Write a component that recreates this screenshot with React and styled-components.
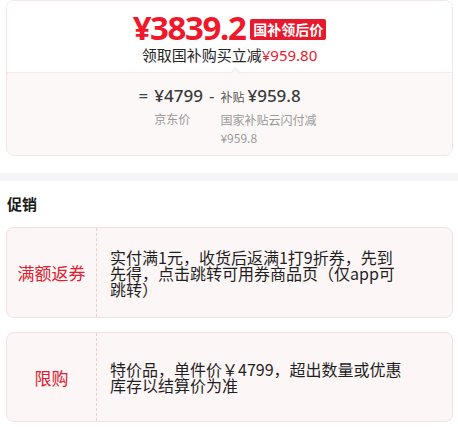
import React from 'react';
import styled, { createGlobalStyle } from 'styled-components';

const GlobalStyle = createGlobalStyle`
  body {
    margin: 0;
    background: #fff;
    font-family: "Noto Sans", "Noto Sans CJK SC", sans-serif;
    color: #1a1a1a;
  }
`;

const Page = styled.div`
  width: 458px;
  padding: 0 5px 0 6px;
  box-sizing: border-box;
`;

const PriceCard = styled.div`
  border: 1px solid #f1e6e8;
  border-radius: 8px;
  overflow: hidden;
`;

const Top = styled.div`
  height: 71px;
  box-sizing: border-box;
  padding-top: 11px;
  display: flex;
  flex-direction: column;
  align-items: center;
  background: #fff;
`;

const PriceRow = styled.div`
  display: flex;
  align-items: center;
  gap: 5px;
  height: 32px;
`;

const BigPrice = styled.span`
  font-family: "Noto Sans", sans-serif;
  font-weight: 700;
  font-size: 33px;
  line-height: 32px;
  letter-spacing: -1.4px;
  color: #f0182b;
`;

const Badge = styled.span`
  background: #e8192c;
  color: #fff;
  font-family: "Noto Sans CJK SC", sans-serif;
  font-weight: 700;
  font-size: 14px;
  line-height: 21px;
  padding: 0 3px;
  border-radius: 2px;
  margin-top: 3px;
`;

const Sub = styled.div`
  font-family: "Noto Sans CJK SC", sans-serif;
  font-size: 15px;
  line-height: 20px;
  margin-top: 1px;
  color: #262626;
`;

const Red = styled.span`
  font-family: "Noto Sans", sans-serif;
  color: #e8192c;
`;

const Bottom = styled.div`
  position: relative;
  height: 83px;
  box-sizing: border-box;
  border-top: 1px solid #f3e8ea;
  background: #fdf8f8;
  padding-top: 11px;
  display: flex;
  justify-content: center;
  align-items: flex-start;
  gap: 6px;

  &::before {
    content: '';
    position: absolute;
    top: -4px;
    left: 225px;
    width: 6px;
    height: 6px;
    background: #fdf8f8;
    border-left: 1px solid #f3e8ea;
    border-top: 1px solid #f3e8ea;
    transform: rotate(45deg);
  }
`;

const Op = styled.span`
  font-size: 17px;
  line-height: 24px;
  color: #444;
`;

const Col = styled.div`
  display: flex;
  flex-direction: column;
  max-width: ${p => p.$max || 'none'};
`;

const Num = styled.div`
  font-family: "Noto Sans", "Noto Sans CJK SC", sans-serif;
  font-size: 17px;
  font-weight: 500;
  line-height: 24px;
  color: #3a3a3a;
  white-space: nowrap;
`;

const Small = styled.span`
  font-family: "Noto Sans CJK SC", sans-serif;
  font-size: 12px;
  font-weight: 400;
  margin-right: 3px;
  color: #555;
`;

const Label = styled.div`
  font-family: "Noto Sans CJK SC", sans-serif;
  font-size: 12px;
  line-height: 18px;
  color: #999;
  margin-top: 2px;
  word-break: break-all;
`;

const Band = styled.div`
  height: 8px;
  margin: 17px -5px 0 -6px;
  background: #f6f6f9;
`;

const Title = styled.div`
  font-family: "Noto Sans CJK SC", sans-serif;
  font-weight: 700;
  font-size: 15px;
  line-height: 20px;
  padding: 13px 0 0 1px;
  color: #1a1a1a;
`;

const PromoList = styled.div`
  display: flex;
  flex-direction: column;
  gap: 14px;
  margin-top: 13px;
`;

const Promo = styled.div`
  display: flex;
  min-height: ${p => p.$h}px;
  box-sizing: border-box;
  border: 1px solid #f3dfe2;
  border-radius: 8px;
  background: #fdf6f7;
`;

const Tag = styled.div`
  width: 89px;
  flex: none;
  display: flex;
  align-items: center;
  justify-content: center;
  border-right: 1px dashed #ebcfd4;
  font-family: "Noto Sans CJK SC", sans-serif;
  font-size: 17px;
  color: #e0202e;
`;

const PromoText = styled.div`
  flex: 1;
  display: flex;
  align-items: center;
  padding: 0 48px 0 13px;
  font-family: "Noto Sans CJK SC", sans-serif;
  font-size: 16px;
  line-height: 16px;
  color: #1f1f1f;
`;

export default function App() {
  return (
    <Page>
      <GlobalStyle />
      <PriceCard>
        <Top>
          <PriceRow>
            <BigPrice>¥3839.2</BigPrice>
            <Badge>国补领后价</Badge>
          </PriceRow>
          <Sub>领取国补购买立减<Red>¥959.80</Red></Sub>
        </Top>
        <Bottom>
          <Op>=</Op>
          <Col>
            <Num>¥4799</Num>
            <Label>京东价</Label>
          </Col>
          <Op>-</Op>
          <Col $max="100px">
            <Num><Small>补贴</Small>¥959.8</Num>
            <Label>国家补贴云闪付减¥959.8</Label>
          </Col>
        </Bottom>
      </PriceCard>
      <Band />
      <Title>促销</Title>
      <PromoList>
        <Promo $h={91}>
          <Tag>满额返券</Tag>
          <PromoText>实付满1元，收货后返满1打9折券，先到先得，点击跳转可用券商品页（仅app可跳转）</PromoText>
        </Promo>
        <Promo $h={90}>
          <Tag>限购</Tag>
          <PromoText>特价品，单件价￥4799，超出数量或优惠库存以结算价为准</PromoText>
        </Promo>
      </PromoList>
    </Page>
  );
}
